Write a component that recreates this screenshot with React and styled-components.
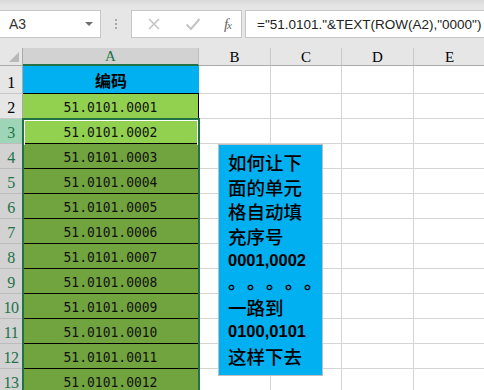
import styled, { createGlobalStyle } from 'styled-components'

const GlobalStyle = createGlobalStyle`
  * { box-sizing: border-box; }
  html, body {
    margin: 0;
    padding: 0;
    width: 484px;
    height: 390px;
    overflow: hidden;
    background: #ffffff;
    font-family: "Liberation Sans", Arial, sans-serif;
  }
`

const columns = ['A', 'B', 'C', 'D', 'E']
const rows = Array.from({ length: 13 }, (_, i) => i + 1)

const noteLines = [
  { text: '如何让下' },
  { text: '面的单元' },
  { text: '格自动填' },
  { text: '充序号' },
  { text: '0001,0002', num: true },
  { text: '。。。。。', dots: true },
  { text: '一路到' },
  { text: '0100,0101', num: true },
  { text: '这样下去' },
]

const codeFor = (row) => '51.0101.' + String(row - 1).padStart(4, '0')

const App = () => {
  return (
    <Page>
      <GlobalStyle />
      <Toolbar>
        <NameBox>
          <NameText>A3</NameText>
          <DropArrow />
        </NameBox>
        <Grip>
          <i /><i /><i />
        </Grip>
        <ButtonBox>
          <IconSlot>
            <svg width="14" height="14" viewBox="0 0 14 14">
              <path d="M2 2 L12 12 M12 2 L2 12" stroke="#c4c4c4" strokeWidth="1.6" fill="none" />
            </svg>
          </IconSlot>
          <IconSlot>
            <svg width="16" height="14" viewBox="0 0 16 14">
              <path d="M1.5 7.5 L6 12 L14.5 2" stroke="#c4c4c4" strokeWidth="2" fill="none" />
            </svg>
          </IconSlot>
          <FxLabel>
            f<sub>x</sub>
          </FxLabel>
        </ButtonBox>
        <FormulaBox>="51.0101."&amp;TEXT(ROW(A2),"0000")</FormulaBox>
      </Toolbar>

      <Sheet>
        <Grid>
          <Corner>
            <CornerMark />
          </Corner>
          {columns.map((c) => (
            <ColHead key={c} $selected={c === 'A'}>{c}</ColHead>
          ))}

          {rows.map((r) => (
            <Row key={r} r={r} />
          ))}
        </Grid>

        <Selection>
          <ActiveCell />
        </Selection>

        <NoteBox>
          {noteLines.map((l, i) => (
            <NoteLine key={i} $num={l.num} $dots={l.dots}>
              {l.dots
                ? l.text.split('').map((d, j) => <Dot key={j}>{d}</Dot>)
                : l.text}
            </NoteLine>
          ))}
        </NoteBox>
      </Sheet>
    </Page>
  )
}

const Row = ({ r }) => {
  const selected = r >= 3
  return (
    <>
      <RowHead $selected={selected} $active={r === 3}>{r}</RowHead>
      {r === 1 ? (
        <HeaderCell>编码</HeaderCell>
      ) : (
        <CodeCell $tone={r <= 3 ? 'light' : 'dark'}>
          <CodeText>{codeFor(r)}</CodeText>
        </CodeCell>
      )}
      {columns.slice(1).map((c) => (
        <Cell key={c} />
      ))}
    </>
  )
}

const Page = styled.div`
  width: 484px;
  height: 390px;
  overflow: hidden;
  display: flex;
  flex-direction: column;
`

const Toolbar = styled.div`
  height: 48px;
  flex: none;
  display: flex;
  align-items: flex-start;
  padding-top: 10px;
  background: linear-gradient(#d9d9d9 0px, #e6e6e6 6px, #e6e6e6 100%);
`

const NameBox = styled.div`
  width: 102px;
  height: 28px;
  margin-left: -1px;
  background: #ffffff;
  border: 1px solid #c6c6c6;
  display: flex;
  align-items: center;
  justify-content: space-between;
  padding: 0 7px 0 9px;
`

const NameText = styled.span`
  font-size: 14px;
  color: #333333;
`

const DropArrow = styled.span`
  width: 0;
  height: 0;
  border-left: 4px solid transparent;
  border-right: 4px solid transparent;
  border-top: 4px solid #6f6f6f;
`

const Grip = styled.div`
  width: 30px;
  height: 28px;
  display: flex;
  flex-direction: column;
  align-items: center;
  justify-content: center;
  gap: 2px;

  i {
    display: block;
    width: 2px;
    height: 2px;
    background: #a8a8a8;
  }
`

const ButtonBox = styled.div`
  width: 111px;
  height: 28px;
  background: #ffffff;
  border: 1px solid #c6c6c6;
  display: flex;
  align-items: center;
  justify-content: space-between;
  padding: 0 10px 0 13px;
`

const IconSlot = styled.span`
  width: 18px;
  height: 16px;
  display: flex;
  align-items: center;
  justify-content: center;
`

const FxLabel = styled.span`
  font-family: "Liberation Serif", "Times New Roman", serif;
  font-style: italic;
  font-size: 15px;
  color: #666666;
  letter-spacing: -1px;

  sub {
    font-size: 11px;
    vertical-align: 0;
  }
`

const FormulaBox = styled.div`
  flex: 1;
  height: 28px;
  margin-left: 3px;
  margin-right: -2px;
  background: #ffffff;
  border: 1px solid #c6c6c6;
  display: flex;
  align-items: center;
  padding-left: 11px;
  font-size: 13.5px;
  color: #222222;
  white-space: nowrap;
  overflow: hidden;
`

const Sheet = styled.div`
  position: relative;
  flex: 1;
  overflow: hidden;
`

const Grid = styled.div`
  display: grid;
  grid-template-columns: 23px 176px 72px 71px 72px 72px;
  grid-template-rows: 18px 28px;
  grid-auto-rows: 25px;
  width: 486px;
`

const Corner = styled.div`
  position: relative;
  background: #e6e6e6;
  border-right: 1px solid #ababab;
  border-bottom: 1px solid #ababab;
`

const CornerMark = styled.span`
  position: absolute;
  right: 3px;
  bottom: 3px;
  width: 0;
  height: 0;
  border-left: 10px solid transparent;
  border-bottom: 10px solid #b9b9b9;
`

const ColHead = styled.div`
  display: flex;
  align-items: center;
  justify-content: center;
  background: ${(p) => (p.$selected ? '#d2d2d2' : '#e6e6e6')};
  color: ${(p) => (p.$selected ? '#217346' : '#000000')};
  border-right: 1px solid ${(p) => (p.$selected ? '#bdbdbd' : '#c8c8c8')};
  border-bottom: ${(p) => (p.$selected ? '2px solid #217346' : '1px solid #ababab')};
  font-family: "Liberation Serif", "Times New Roman", serif;
  font-size: 15px;
  padding-top: 1px;
`

const RowHead = styled.div`
  display: flex;
  align-items: flex-end;
  justify-content: center;
  padding-bottom: 1px;
  background: ${(p) => (p.$active ? '#9fd5b7' : p.$selected ? '#d2d2d2' : '#e6e6e6')};
  color: ${(p) => (p.$selected ? '#217346' : '#000000')};
  border-right: 1px solid #ababab;
  border-bottom: 1px solid ${(p) => (p.$selected ? '#bcbcbc' : '#c8c8c8')};
  font-family: "Liberation Serif", "Times New Roman", serif;
  font-size: 16px;
  line-height: 18px;
  letter-spacing: -0.5px;
`

const HeaderCell = styled.div`
  display: flex;
  align-items: center;
  justify-content: center;
  background: #00b0f0;
  border-bottom: 1px solid #000000;
  font-family: "Noto Sans CJK SC", sans-serif;
  font-weight: 700;
  font-size: 16px;
  color: #000000;
  padding-top: 1px;
`

const CodeCell = styled.div`
  display: flex;
  align-items: flex-end;
  justify-content: center;
  padding-bottom: 3px;
  background: ${(p) => (p.$tone === 'light' ? '#92d050' : '#71a33f')};
  border-right: 1px solid #000000;
  border-bottom: 1px solid #000000;
`

const CodeText = styled.span`
  display: inline-block;
  font-family: "DejaVu Sans Mono", "Liberation Mono", monospace;
  font-size: 13px;
  line-height: 15px;
  color: #111111;
  transform: scaleY(1.12);
  transform-origin: bottom center;
`

const Cell = styled.div`
  background: #ffffff;
  border-right: 1px solid #d4d4d4;
  border-bottom: 1px solid #d4d4d4;
`

const Selection = styled.div`
  position: absolute;
  left: 22px;
  top: 70px;
  width: 178px;
  height: 320px;
  border: 2px solid #217346;
  pointer-events: none;
`

const ActiveCell = styled.div`
  position: absolute;
  left: 0;
  top: 0;
  width: 174px;
  height: 25px;
  border: 1px solid #ffffff;
  border-bottom: none;
`

const NoteBox = styled.div`
  position: absolute;
  left: 218px;
  top: 96px;
  width: 105px;
  height: 232px;
  background: #00b0f0;
  border: 1px solid #bfbfbf;
  padding: 5px 0 0 9px;
  display: flex;
  flex-direction: column;
`

const NoteLine = styled.div`
  flex: none;
  height: ${(p) => (p.$dots ? '22px' : '24.5px')};
  line-height: 24.5px;
  white-space: nowrap;
  display: flex;
  align-items: ${(p) => (p.$dots ? 'flex-start' : 'center')};
  color: #000000;
  font-family: ${(p) => (p.$num ? '"Liberation Sans", Arial, sans-serif' : '"Noto Sans CJK SC", sans-serif')};
  font-weight: ${(p) => (p.$num ? 700 : 500)};
  font-size: ${(p) => (p.$num ? '16.5px' : '18.5px')};
`

const Dot = styled.span`
  width: 19px;
  height: 16px;
  flex: none;
  font-family: "Noto Sans CJK SC", sans-serif;
  font-weight: 700;
  font-size: 18px;
  line-height: 16px;
`

export default App
